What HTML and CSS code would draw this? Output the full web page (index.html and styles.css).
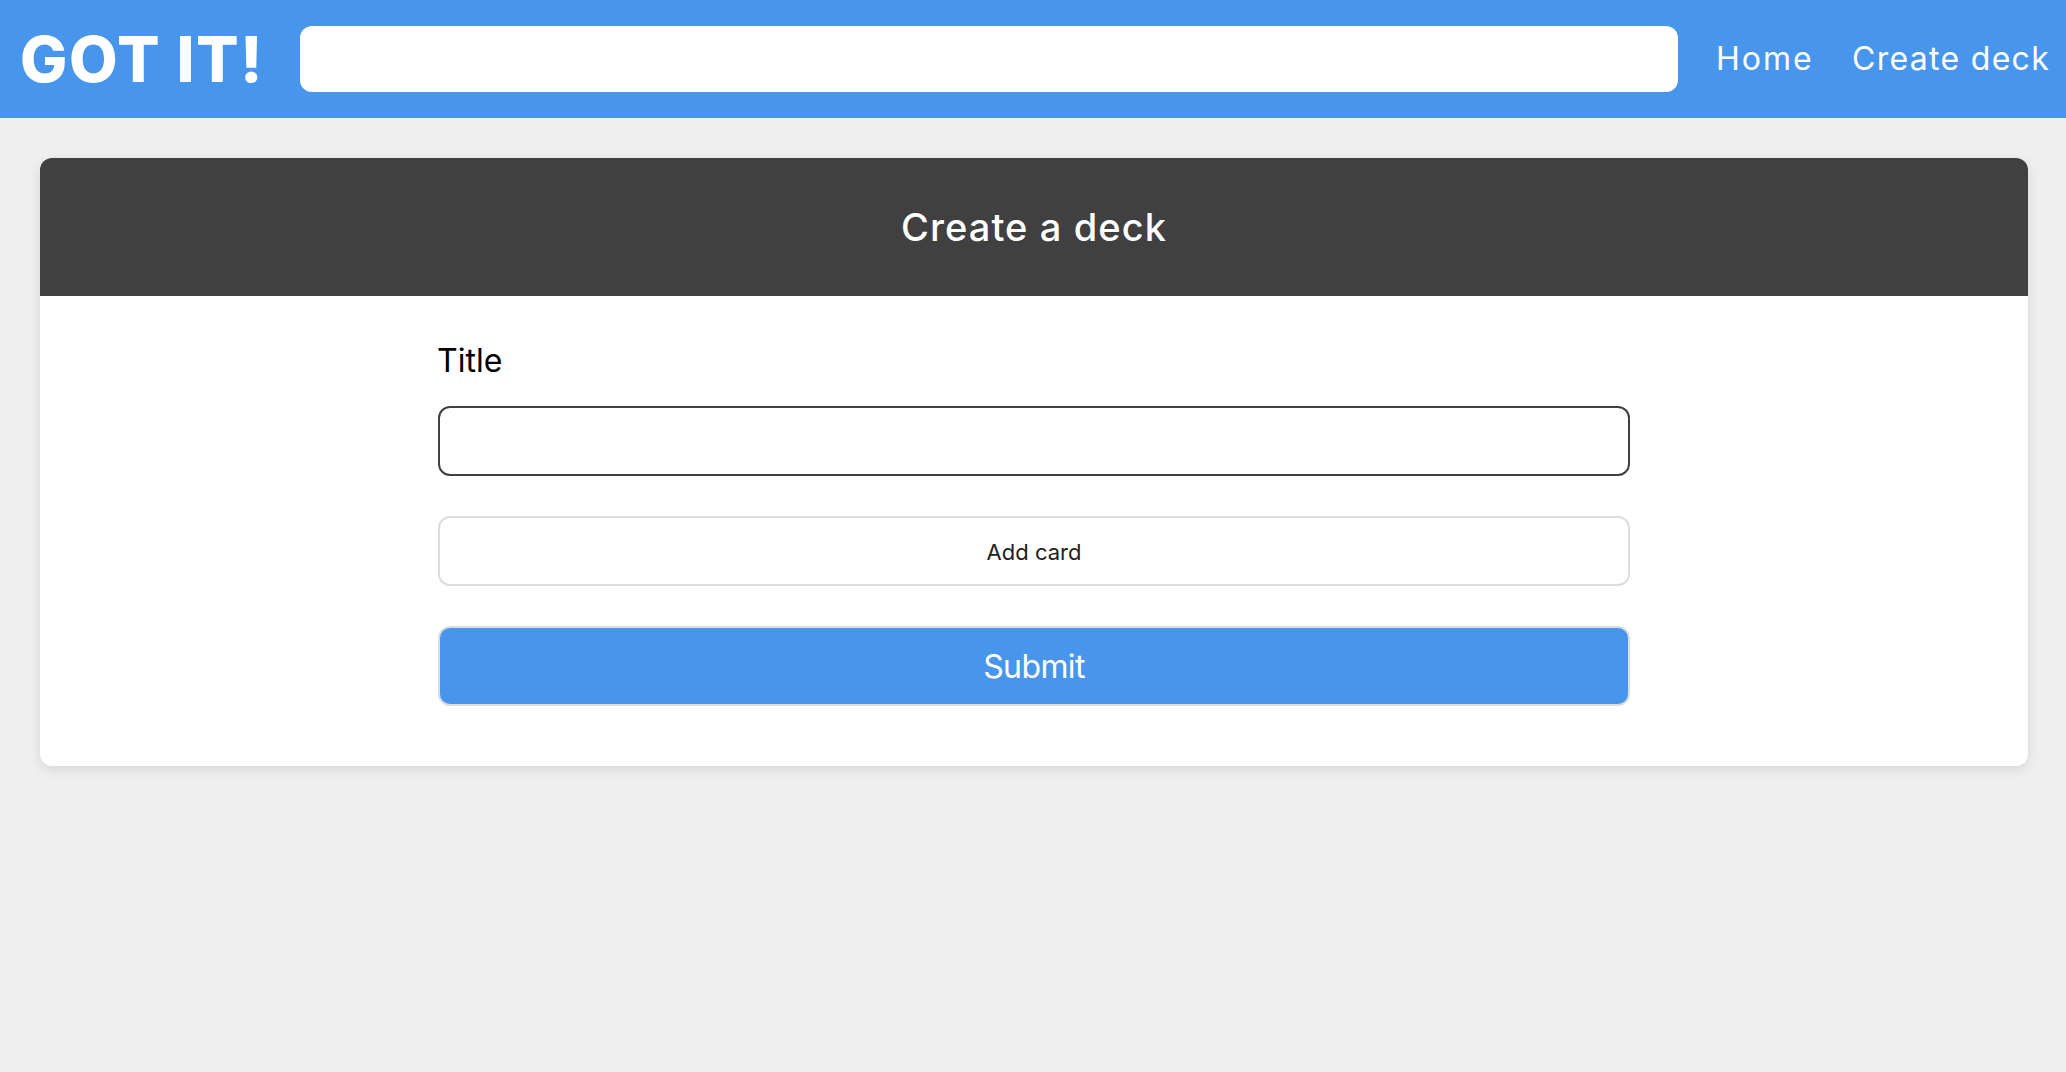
FILE: index.html
```
<!DOCTYPE html>
<html lang="en">
<head>
<meta charset="utf-8">
<title>GOT IT!</title>
<link rel="stylesheet" href="styles.css">
</head>
<body>
<header class="navbar">
  <a class="logo">GOT IT!</a>
  <input class="search" type="text" aria-label="Search">
  <nav class="links">
    <a class="link-home">Home</a>
    <a class="link-create">Create deck</a>
  </nav>
</header>
<main class="card">
  <h1 class="card-header">Create a deck</h1>
  <form class="form">
    <label class="label" for="title">Title</label>
    <input class="field" id="title" type="text">
    <button class="button button-add" type="button">Add card</button>
    <button class="button button-submit" type="button">Submit</button>
  </form>
</main>
</body>
</html>
```

FILE: styles.css
```
* { box-sizing: border-box; }

html { background: #efefef; }

body {
  margin: 0;
  min-height: 100vh;
  background: #efefef;
  font-family: Inter, "Liberation Sans", sans-serif;
  font-size: 32px;
  color: #000;
}

.navbar {
  display: flex;
  align-items: center;
  height: 118px;
  background: #4896ec;
  color: #fff;
}

.logo {
  flex: none;
  width: 300px;
  padding-left: 20px;
  font-size: 63px;
  font-weight: 800;
  letter-spacing: 1.5px;
  line-height: 118px;
  white-space: nowrap;
}

.search {
  flex: none;
  width: 1378px;
  height: 66px;
  padding: 0 20px;
  border: 0;
  border-radius: 12px;
  background: #fff;
  font: inherit;
}

.links {
  display: flex;
  flex: 1;
  line-height: 118px;
  white-space: nowrap;
}

.link-home { width: 136px; margin-left: 38px; letter-spacing: 2px; }

.link-create { letter-spacing: 1.3px; }

.card {
  margin: 40px 38px 0 40px;
  height: 608px;
  border-radius: 12px;
  background: #fff;
  box-shadow: 0 4px 12px rgba(0, 0, 0, 0.1);
}

.card-header {
  margin: 0;
  height: 138px;
  border-radius: 12px 12px 0 0;
  background: #404040;
  color: #fff;
  font-size: 38px;
  font-weight: 500;
  letter-spacing: 1.1px;
  line-height: 138px;
  text-align: center;
}

.form {
  display: flex;
  flex-direction: column;
  width: 1192px;
  margin: 0 auto;
  padding-top: 40px;
}

.label {
  height: 70px;
  margin-left: -1px;
  line-height: 50px;
}

.field {
  height: 70px;
  padding: 0 20px;
  border: 2px solid #404040;
  border-radius: 12px;
  background: #fff;
  font: inherit;
}

.button {
  margin: 40px 0 0;
  padding: 0;
  border: 2px solid #ddd;
  border-radius: 12px;
  font-family: inherit;
}

.button-add {
  height: 70px;
  padding-top: 2px;
  background: #fff;
  color: #222;
  font-size: 22px;
}

.button-submit {
  height: 80px;
  background: #4896ec;
  color: #fff;
  font-size: 32px;
  letter-spacing: -0.6px;
}
```
